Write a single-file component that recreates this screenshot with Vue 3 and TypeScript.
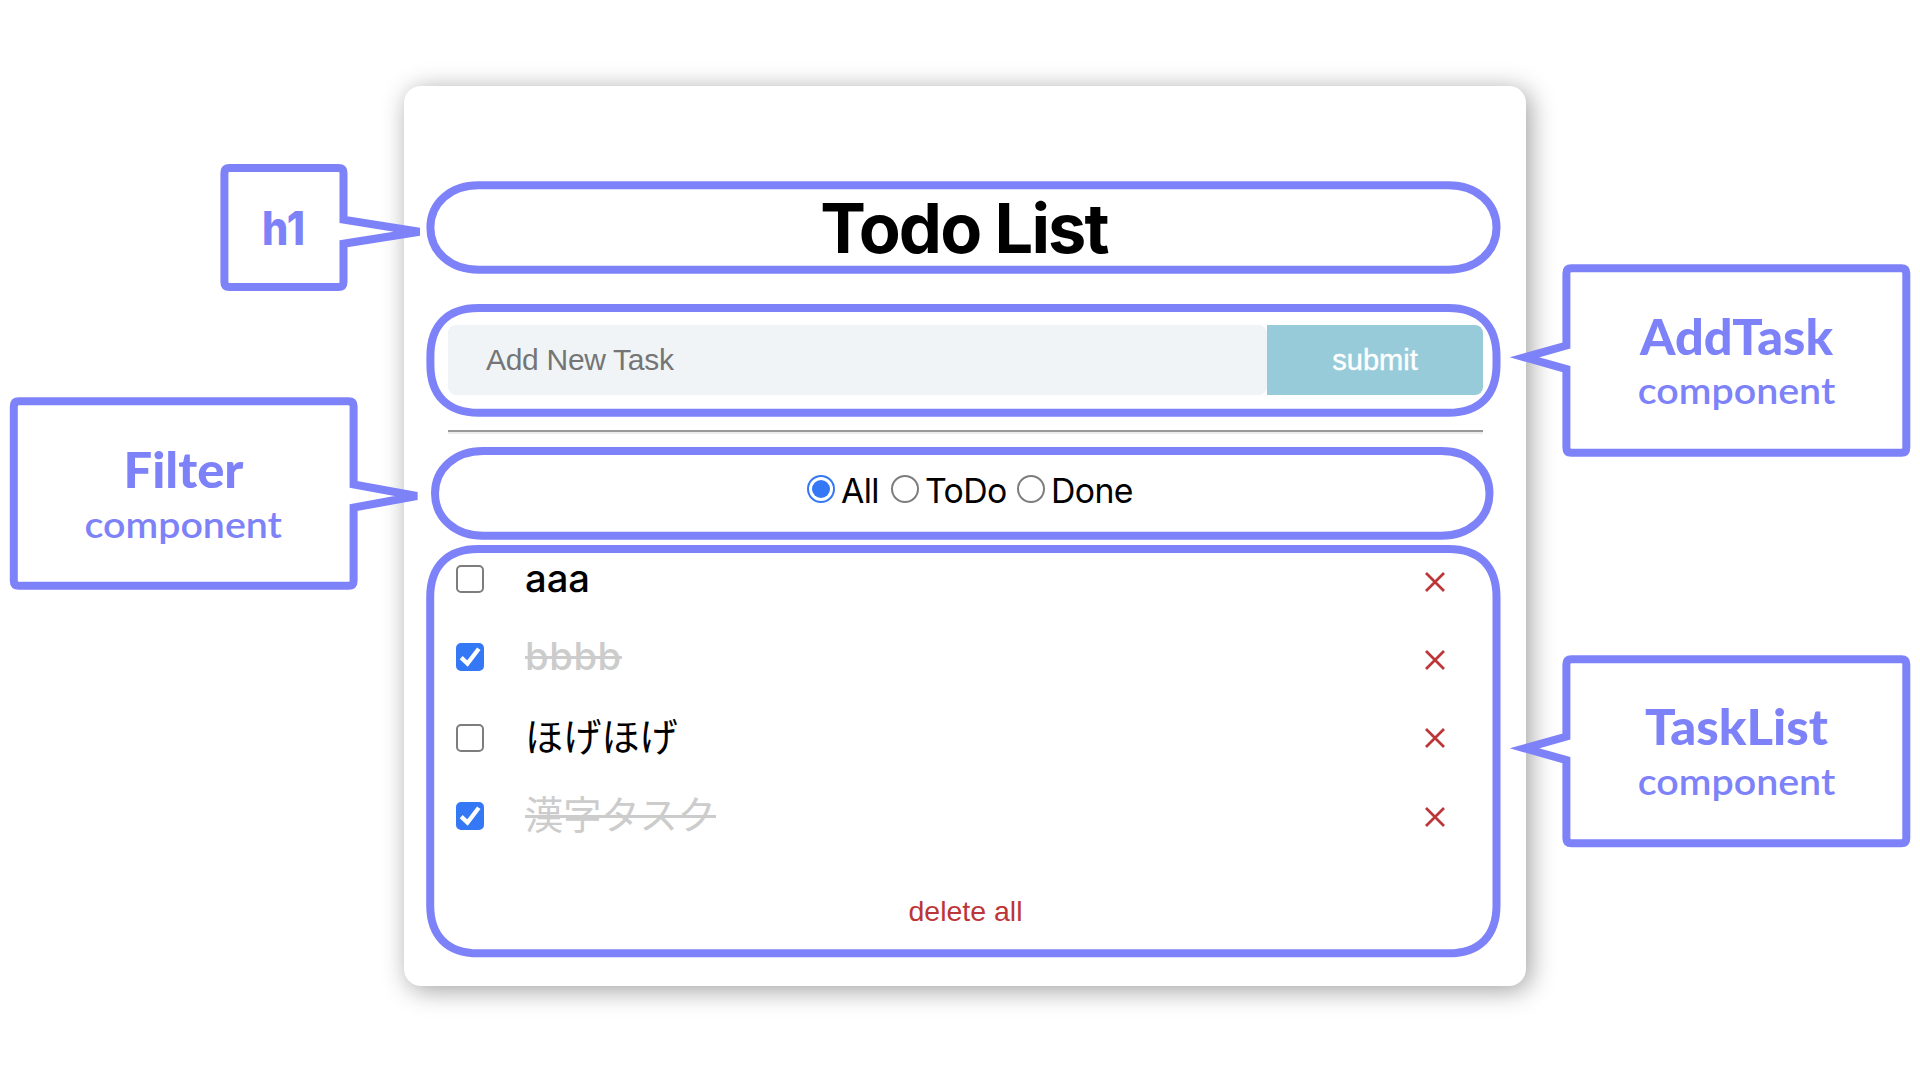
<script setup lang="ts">
import { ref } from 'vue'

interface Task { id: number; name: string; done: boolean }
interface Note { title: string; sub?: string; x: number; y: number; width: number; subY?: number; path: string }

const draft = ref('')
const filter = ref('All')
const filters = ['All', 'ToDo', 'Done']
const tasks = ref<Task[]>([
  { id: 1, name: 'aaa', done: false },
  { id: 2, name: 'bbbb', done: true },
  { id: 3, name: 'ほげほげ', done: false },
  { id: 4, name: '漢字タスク', done: true },
])
const isLatin = (s: string) => /^[\x20-\x7e]+$/.test(s)

// A frame with softly eased corners, given by its centre line
function ring(l: number, t: number, r: number, b: number): string {
  const rx = 48
  const ry = Math.min(48, (b - t) / 2)
  const k = ry < 48 ? 0.42 : 0.36
  return `M${l + rx} ${t}H${r - rx}C${r - rx * k} ${t} ${r} ${t + ry * k} ${r} ${t + ry}V${b - ry}` +
    `C${r} ${b - ry * k} ${r - rx * k} ${b} ${r - rx} ${b}H${l + rx}` +
    `C${l + rx * k} ${b} ${l} ${b - ry * k} ${l} ${b - ry}V${t + ry}C${l} ${t + ry * k} ${l + rx * k} ${t} ${l + rx} ${t}Z`
}
const rings = [
  ring(430.4, 185.3, 1496.5, 269.7),
  ring(430.4, 308, 1496.5, 412.7),
  ring(435, 451, 1489.5, 535.7),
  ring(430.2, 549, 1496.5, 953.3),
]

// Bubble outline; the tip points right when it lies beyond the right edge
function bubble(l: number, t: number, r: number, b: number, tipX: number, tipY: number, half: number): string {
  const c = 5
  const right = tipX > r
  const tip = (x: number, s: number) => `V${tipY - half * s}L${tipX} ${tipY}L${x} ${tipY + half * s}`
  return `M${l + c} ${t}H${r - c}Q${r} ${t} ${r} ${t + c}${right ? tip(r, 1) : ''}V${b - c}Q${r} ${b} ${r - c} ${b}` +
    `H${l + c}Q${l} ${b} ${l} ${b - c}${right ? '' : tip(l, -1)}V${t + c}Q${l} ${t} ${l + c} ${t}Z`
}
const notes: Note[] = [
  { title: 'h1', x: 262, y: 244.8, width: 43, path: bubble(224.4, 168, 343.5, 287, 419.4, 231.7, 12) },
  { title: 'Filter', sub: 'component', x: 123.5, y: 487.5, width: 120, subY: 537.5, path: bubble(13.8, 401.3, 353.6, 585.7, 416.9, 496, 11.6) },
  { title: 'AddTask', sub: 'component', x: 1640, y: 354.5, width: 193, subY: 404.3, path: bubble(1566.4, 268.3, 1906.3, 452.7, 1524.5, 357.3, 11.8) },
  { title: 'TaskList', sub: 'component', x: 1645, y: 745, width: 183, subY: 795, path: bubble(1566.4, 659.3, 1906.3, 843.2, 1524.5, 748.3, 11.8) },
]
const subX = (n: Note) => (n.x < 900 ? 84.5 : 1637.8)
function remove(id: number) { tasks.value = tasks.value.filter(t => t.id !== id) }
</script>

<template>
  <div class="page">
    <main class="card">
      <h1>Todo List</h1>
      <form class="add" @submit.prevent>
        <input v-model="draft" type="text" placeholder="Add New Task">
        <button type="submit">submit</button>
      </form>
      <hr>
      <div class="filters">
        <label v-for="f in filters" :key="f">
          <input v-model="filter" type="radio" name="filter" :value="f"><span>{{ f }}</span>
        </label>
      </div>
      <ul>
        <li v-for="t in tasks" :key="t.id" :class="{ done: t.done, latin: isLatin(t.name) }">
          <label class="box">
            <input v-model="t.done" type="checkbox">
            <svg v-if="t.done" viewBox="0 0 28 28"><path d="M5.2 14.6L11.5 20.6L22.8 5.8" /></svg>
          </label>
          <span class="name">{{ t.name }}</span>
          <button class="del" aria-label="delete" @click="remove(t.id)">
            <svg viewBox="0 0 22 22"><path d="M2 2L20 20M20 2L2 20" /></svg>
          </button>
        </li>
      </ul>
      <button class="clear" @click="tasks = []">delete all</button>
    </main>

    <svg class="notes" viewBox="0 0 1920 1080">
      <path v-for="(d, i) in rings" :key="i" :d="d" />
      <g v-for="n in notes" :key="n.title">
        <path :d="n.path" class="bubble" />
        <text class="title" :class="{ tag: !n.sub }" :x="n.x" :y="n.y" :textLength="n.width" lengthAdjust="spacingAndGlyphs">{{ n.title }}</text>
        <text v-if="n.sub" class="sub" :x="subX(n)" :y="n.subY" textLength="197.5" lengthAdjust="spacingAndGlyphs">{{ n.sub }}</text>
      </g>
    </svg>
  </div>
</template>

<style>
body { background: #fff; }
</style>

<style scoped>
.page {
  position: relative;
  box-sizing: border-box;
  width: 1920px;
  height: 1080px;
  padding: 86px 394px 94px 404px;
  overflow: hidden;
  font-family: Inter, "Noto Sans CJK JP", sans-serif;
  color: #000;
}
.card {
  box-sizing: border-box;
  display: flex;
  flex-direction: column;
  height: 900px;
  padding: 101px 43px 0 44px;
  border-radius: 17px;
  background: #fff;
  box-shadow: 4px 4px 26px rgba(0, 0, 0, .38);
}
h1 {
  margin: 0;
  height: 84px;
  padding-right: 3px;
  font-size: 68.5px;
  font-weight: 700;
  line-height: 84px;
  letter-spacing: -1.9px;
  text-align: center;
}
.add { display: flex; height: 70px; margin-top: 54px; }
.add input {
  box-sizing: border-box;
  flex: 1;
  min-width: 0;
  padding: 0 38px;
  border: 0;
  border-radius: 8px;
  outline: 0;
  background: #f0f4f7;
  font: 30px "Liberation Sans", sans-serif;
  letter-spacing: -.3px;
}
.add input::placeholder { color: #757575; opacity: 1; }
.add button {
  width: 216px;
  padding: 0;
  border: 0;
  border-radius: 0 8px 8px 0;
  background: #98cbd9;
  color: #fff;
  font: 29px "Liberation Sans", sans-serif;
  -webkit-text-stroke: .4px #fff;
}
hr {
  width: 100%;
  box-sizing: border-box;
  height: 4px;
  margin: 35px 0 0;
  border: 0;
  border-top: 2px solid #999;
  border-bottom: 2px solid #ececec;
}
.filters {
  display: grid;
  grid-template-columns: 84px 126px 120px;
  height: 56px;
  margin: 28px 0 0 359px;
  font-size: 33.8px;
  letter-spacing: -.6px;
}
.filters label { display: flex; align-items: center; }
.filters input {
  appearance: none;
  box-sizing: border-box;
  display: grid;
  place-items: center;
  flex: none;
  width: 28px;
  height: 28px;
  margin: 0 6px 3px 0;
  border: 2px solid #7d7d7d;
  border-radius: 50%;
}
.filters input:checked { border-color: #3478f6; }
.filters input:checked::after { content: ""; width: 18px; height: 18px; border-radius: 50%; background: #3478f6; }
ul { margin: 25px 0 0; padding: 0; list-style: none; }
li { display: flex; align-items: center; height: 78.2px; padding: 0 37px 0 8px; }
.box { position: relative; display: block; width: 28px; height: 28px; margin-bottom: 1px; }
.box input {
  appearance: none;
  box-sizing: border-box;
  display: block;
  width: 28px;
  height: 28px;
  margin: 0;
  border: 2px solid #7d7d7d;
  border-radius: 5px;
}
.box input:checked { border-color: #3478f6; background: #3478f6; }
.box svg { position: absolute; inset: 0; width: 28px; height: 28px; fill: none; stroke: #fff; stroke-width: 4.3; }
.name {
  flex: 1;
  margin: 0 0 3px 41px;
  font-size: 38.2px;
  font-weight: 400;
  line-height: 56px;
  white-space: nowrap;
}
.latin .box { margin-bottom: 6px; }
.latin .name { margin-bottom: 8px; font-weight: 500; }
.done .name { color: #ccc; text-decoration: line-through; }
.done.latin .name { letter-spacing: .6px; }
.del { display: block; padding: 0; border: 0; background: none; }
.del svg { display: block; width: 22px; height: 22px; fill: none; stroke: #bc3539; stroke-width: 2.7; }
.clear {
  align-self: center;
  margin-top: 38.5px;
  padding: 0;
  border: 0;
  background: none;
  color: #bc3539;
  font: 28.5px/34px "Liberation Sans", sans-serif;
}
.notes { position: absolute; inset: 0; width: 1920px; height: 1080px; pointer-events: none; }
.notes path { fill: none; stroke: #7e82f8; stroke-width: 8; }
.notes .bubble { fill: #fff; }
.notes text { font-family: Lato, sans-serif; fill: #7e82f8; }
.notes .title { font-size: 50px; font-weight: 900; }
.notes .tag { font-family: Inter, sans-serif; font-size: 47px; font-weight: 800; }
.notes .sub { font-size: 36px; font-weight: 600; }
</style>
